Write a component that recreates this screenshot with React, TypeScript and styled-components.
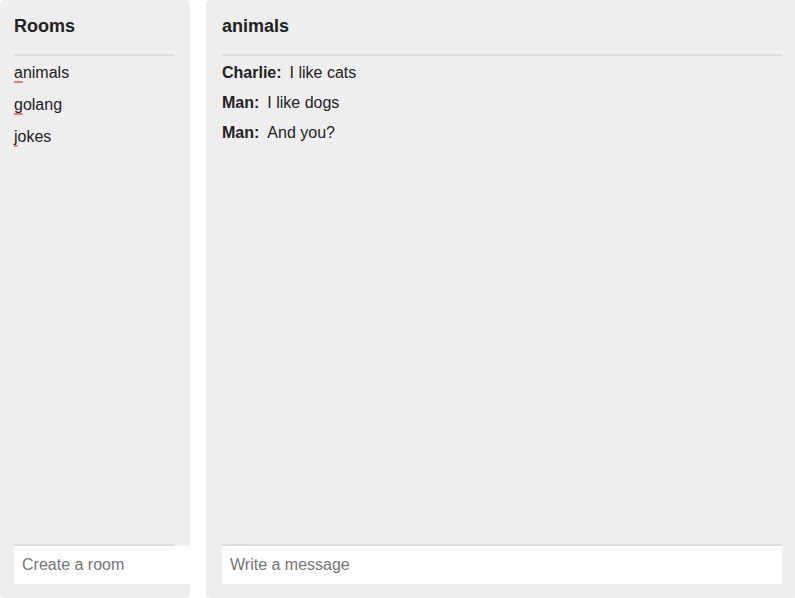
import React from "react";
import styled, { createGlobalStyle } from "styled-components";

const rooms = ["animals", "golang", "jokes"];

const messages = [
    { author: "Charlie", text: "I like cats" },
    { author: "Man", text: "I like dogs" },
    { author: "Man", text: "And you?" },
];

const App = () => {
    return (
        <>
            <GlobalStyle />
            <Layout>
                <Sidebar>
                    <Title>Rooms</Title>
                    <RoomList>
                        {rooms.map((room) => (
                            <Room key={room}>{room}</Room>
                        ))}
                    </RoomList>
                    <Form>
                        <Input placeholder="Create a room" wide />
                    </Form>
                </Sidebar>
                <Chat>
                    <Title>animals</Title>
                    <MessageList>
                        {messages.map((m, idx) => (
                            <Message key={idx}>
                                <Author>{m.author}:</Author>
                                <span>{m.text}</span>
                            </Message>
                        ))}
                    </MessageList>
                    <Form>
                        <Input placeholder="Write a message" autoFocus />
                    </Form>
                </Chat>
            </Layout>
        </>
    );
};

export default App;

const GlobalStyle = createGlobalStyle`
    html, body {
        margin: 0;
        padding: 0;
        background: #fff;
        overflow: hidden;
    }
    body {
        font-family: "Liberation Sans", Arial, sans-serif;
        color: #222;
    }
`;

const Layout = styled.div`
    display: flex;
    gap: 16px;
    width: 798px;
    height: 598px;
`;

const Panel = styled.div`
    display: flex;
    flex-direction: column;
    box-sizing: border-box;
    height: 100%;
    background: #eeeeee;
    border-radius: 5px;
    padding: 16px 16px 14px;
`;

const Sidebar = styled(Panel)`
    width: 190px;
    padding-left: 14px;
`;

const Chat = styled(Panel)`
    flex: 1;
`;

const Title = styled.h2`
    margin: 0 0 17px;
    font-size: 18px;
    line-height: 21px;
    font-weight: bold;
`;

const RoomList = styled.ul`
    flex: 1;
    list-style: none;
    margin: 0;
    padding: 1px 0 0;
    border-top: 2px solid #dddddd;
`;

const Room = styled.li`
    font-size: 16px;
    line-height: 32px;

    &::first-letter {
        text-decoration: underline solid #f07a7a;
        text-decoration-thickness: 2px;
        text-underline-offset: 3px;
    }
`;

const MessageList = styled.div`
    flex: 1;
    padding-top: 2px;
    border-top: 2px solid #dddddd;
`;

const Message = styled.div`
    display: flex;
    gap: 8px;
    font-size: 16px;
    line-height: 30px;
`;

const Author = styled.b`
    font-weight: bold;
`;

const Form = styled.form`
    display: flex;
    margin: 0;
    border-top: 2px solid #dddddd;
`;

const Input = styled.input<{ wide?: boolean }>`
    box-sizing: border-box;
    flex: none;
    width: ${(props) => (props.wide ? "176px" : "100%")};
    height: 38px;
    padding: 0 8px;
    border: none;
    outline: none;
    background: #fff;
    font-family: "Liberation Sans", Arial, sans-serif;
    font-size: 16px;
    color: #222;

    &::placeholder {
        color: #757575;
    }
`;
